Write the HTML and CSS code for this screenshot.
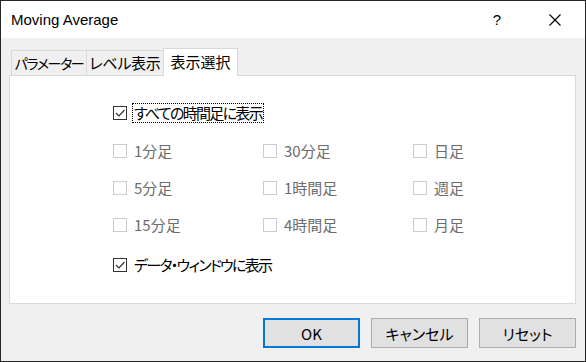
FILE: index.html
```html
<!DOCTYPE html>
<html lang="ja">

<head>
  <meta charset="UTF-8">
  <title>Moving Average</title>
  <link rel="stylesheet" href="styles.css">
</head>

<body>
  <div class="window">
    <div class="titlebar">
      <span class="title">Moving Average</span>
      <span class="help-btn">?</span>
      <span class="close-btn">
        <svg width="12" height="12" viewBox="0 0 12 12">
          <path d="M0.5 0.5 L11.5 11.5 M11.5 0.5 L0.5 11.5" stroke="#000" stroke-width="1.1" fill="none" />
        </svg>
      </span>
    </div>

    <div class="dialog-body">
      <div class="tabs">
        <div class="tab tab-params">パラメーター</div>
        <div class="tab tab-levels">レベル表示</div>
        <div class="tab tab-active">表示選択</div>
      </div>

      <div class="panel">
        <label class="check-row">
          <span class="box checked">
            <svg width="10" height="10" viewBox="0 0 10 10">
              <path d="M1 5 L4 8 L9.5 2" stroke="#333" stroke-width="1.2" fill="none" />
            </svg>
          </span>
          <span class="label focused tight">すべての時間足に表示</span>
        </label>

        <div class="period-grid">
          <label class="check-row disabled"><span class="box"></span><span class="label">1分足</span></label>
          <label class="check-row disabled"><span class="box"></span><span class="label">30分足</span></label>
          <label class="check-row disabled"><span class="box"></span><span class="label">日足</span></label>
          <label class="check-row disabled"><span class="box"></span><span class="label">5分足</span></label>
          <label class="check-row disabled"><span class="box"></span><span class="label">1時間足</span></label>
          <label class="check-row disabled"><span class="box"></span><span class="label">週足</span></label>
          <label class="check-row disabled"><span class="box"></span><span class="label">15分足</span></label>
          <label class="check-row disabled"><span class="box"></span><span class="label">4時間足</span></label>
          <label class="check-row disabled"><span class="box"></span><span class="label">月足</span></label>
        </div>

        <label class="check-row data-window">
          <span class="box checked">
            <svg width="10" height="10" viewBox="0 0 10 10">
              <path d="M1 5 L4 8 L9.5 2" stroke="#333" stroke-width="1.2" fill="none" />
            </svg>
          </span>
          <span class="label tight">データ・ウィンドウに表示</span>
        </label>
      </div>

      <div class="buttons">
        <button class="btn btn-default">OK</button>
        <button class="btn">キャンセル</button>
        <button class="btn">リセット</button>
      </div>
    </div>
  </div>
</body>

</html>
```

FILE: styles.css
```css
* {
  margin: 0;
  padding: 0;
  box-sizing: border-box;
}

body {
  font-family: 'Noto Sans CJK JP', 'Liberation Sans', sans-serif;
  font-size: 15px;
  color: #000;
  background-color: #1e1e1e;
  font-feature-settings: "palt";
}

.window {
  width: 586px;
  height: 362px;
  border: 1px solid #262626;
  background-color: #f0f0f0;
  display: flex;
  flex-direction: column;
}

.titlebar {
  height: 37px;
  background-color: #fff;
  display: flex;
  align-items: center;
}

.title {
  font-family: 'Liberation Sans', sans-serif;
  font-size: 15px;
  padding-left: 10px;
  flex: 1;
}

.help-btn {
  font-family: 'Liberation Sans', sans-serif;
  font-size: 15px;
  width: 46px;
  margin-right: 12px;
  text-align: center;
}

.close-btn {
  width: 46px;
  display: flex;
  justify-content: center;
  margin-right: 7px;
}

.dialog-body {
  flex: 1;
  padding: 10px 9px 0 8px;
  display: flex;
  flex-direction: column;
}

.tabs {
  display: flex;
  align-items: flex-end;
  height: 27px;
  padding-left: 2px;
}

.tab {
  height: 25px;
  border: 1px solid #d9d9d9;
  border-bottom: none;
  background-color: #f0f0f0;
  display: flex;
  align-items: center;
  justify-content: center;
  padding-bottom: 1px;
  white-space: nowrap;
}

.tab-params {
  width: 76px;
  font-size: 14px;
  letter-spacing: -1.4px;
}

.tab-levels {
  width: 78px;
  margin-left: -1px;
  letter-spacing: -0.3px;
}

.tab-active {
  width: 75px;
  height: 28px;
  margin-left: -1px;
  margin-bottom: -1px;
  background-color: #fff;
  position: relative;
  z-index: 1;
  padding-bottom: 3px;
}

.panel {
  height: 229px;
  background-color: #fff;
  border: 1px solid #d9d9d9;
  padding: 27px 0 0 103px;
}

.check-row {
  display: flex;
  align-items: center;
  height: 20px;
}

.box {
  width: 14px;
  height: 14px;
  border: 1px solid #cccccc;
  background-color: #fff;
  display: flex;
  align-items: center;
  justify-content: center;
  margin-right: 5px;
}

.box.checked {
  border-color: #333;
}

.label {
  padding: 0 1px;
  line-height: 18px;
  border: 1px dotted transparent;
  white-space: nowrap;
}

.label.tight {
  letter-spacing: -1.7px;
}

.label.focused {
  border-color: #000;
}

.disabled .label {
  color: #6d6d6d;
}

.period-grid {
  display: grid;
  grid-template-columns: 150px 150px 150px;
  row-gap: 17px;
  margin-top: 18px;
}

.data-window {
  margin-top: 20px;
}

.buttons {
  display: flex;
  justify-content: flex-end;
  gap: 11px;
  margin-top: 14px;
}

.btn {
  width: 97px;
  height: 30px;
  font-family: 'Noto Sans CJK JP', 'Liberation Sans', sans-serif;
  font-size: 15px;
  font-feature-settings: "palt";
  background-color: #e1e1e1;
  border: 1px solid #adadad;
  color: #000;
}

.btn-default {
  border: 2px solid #0078d7;
}
```
